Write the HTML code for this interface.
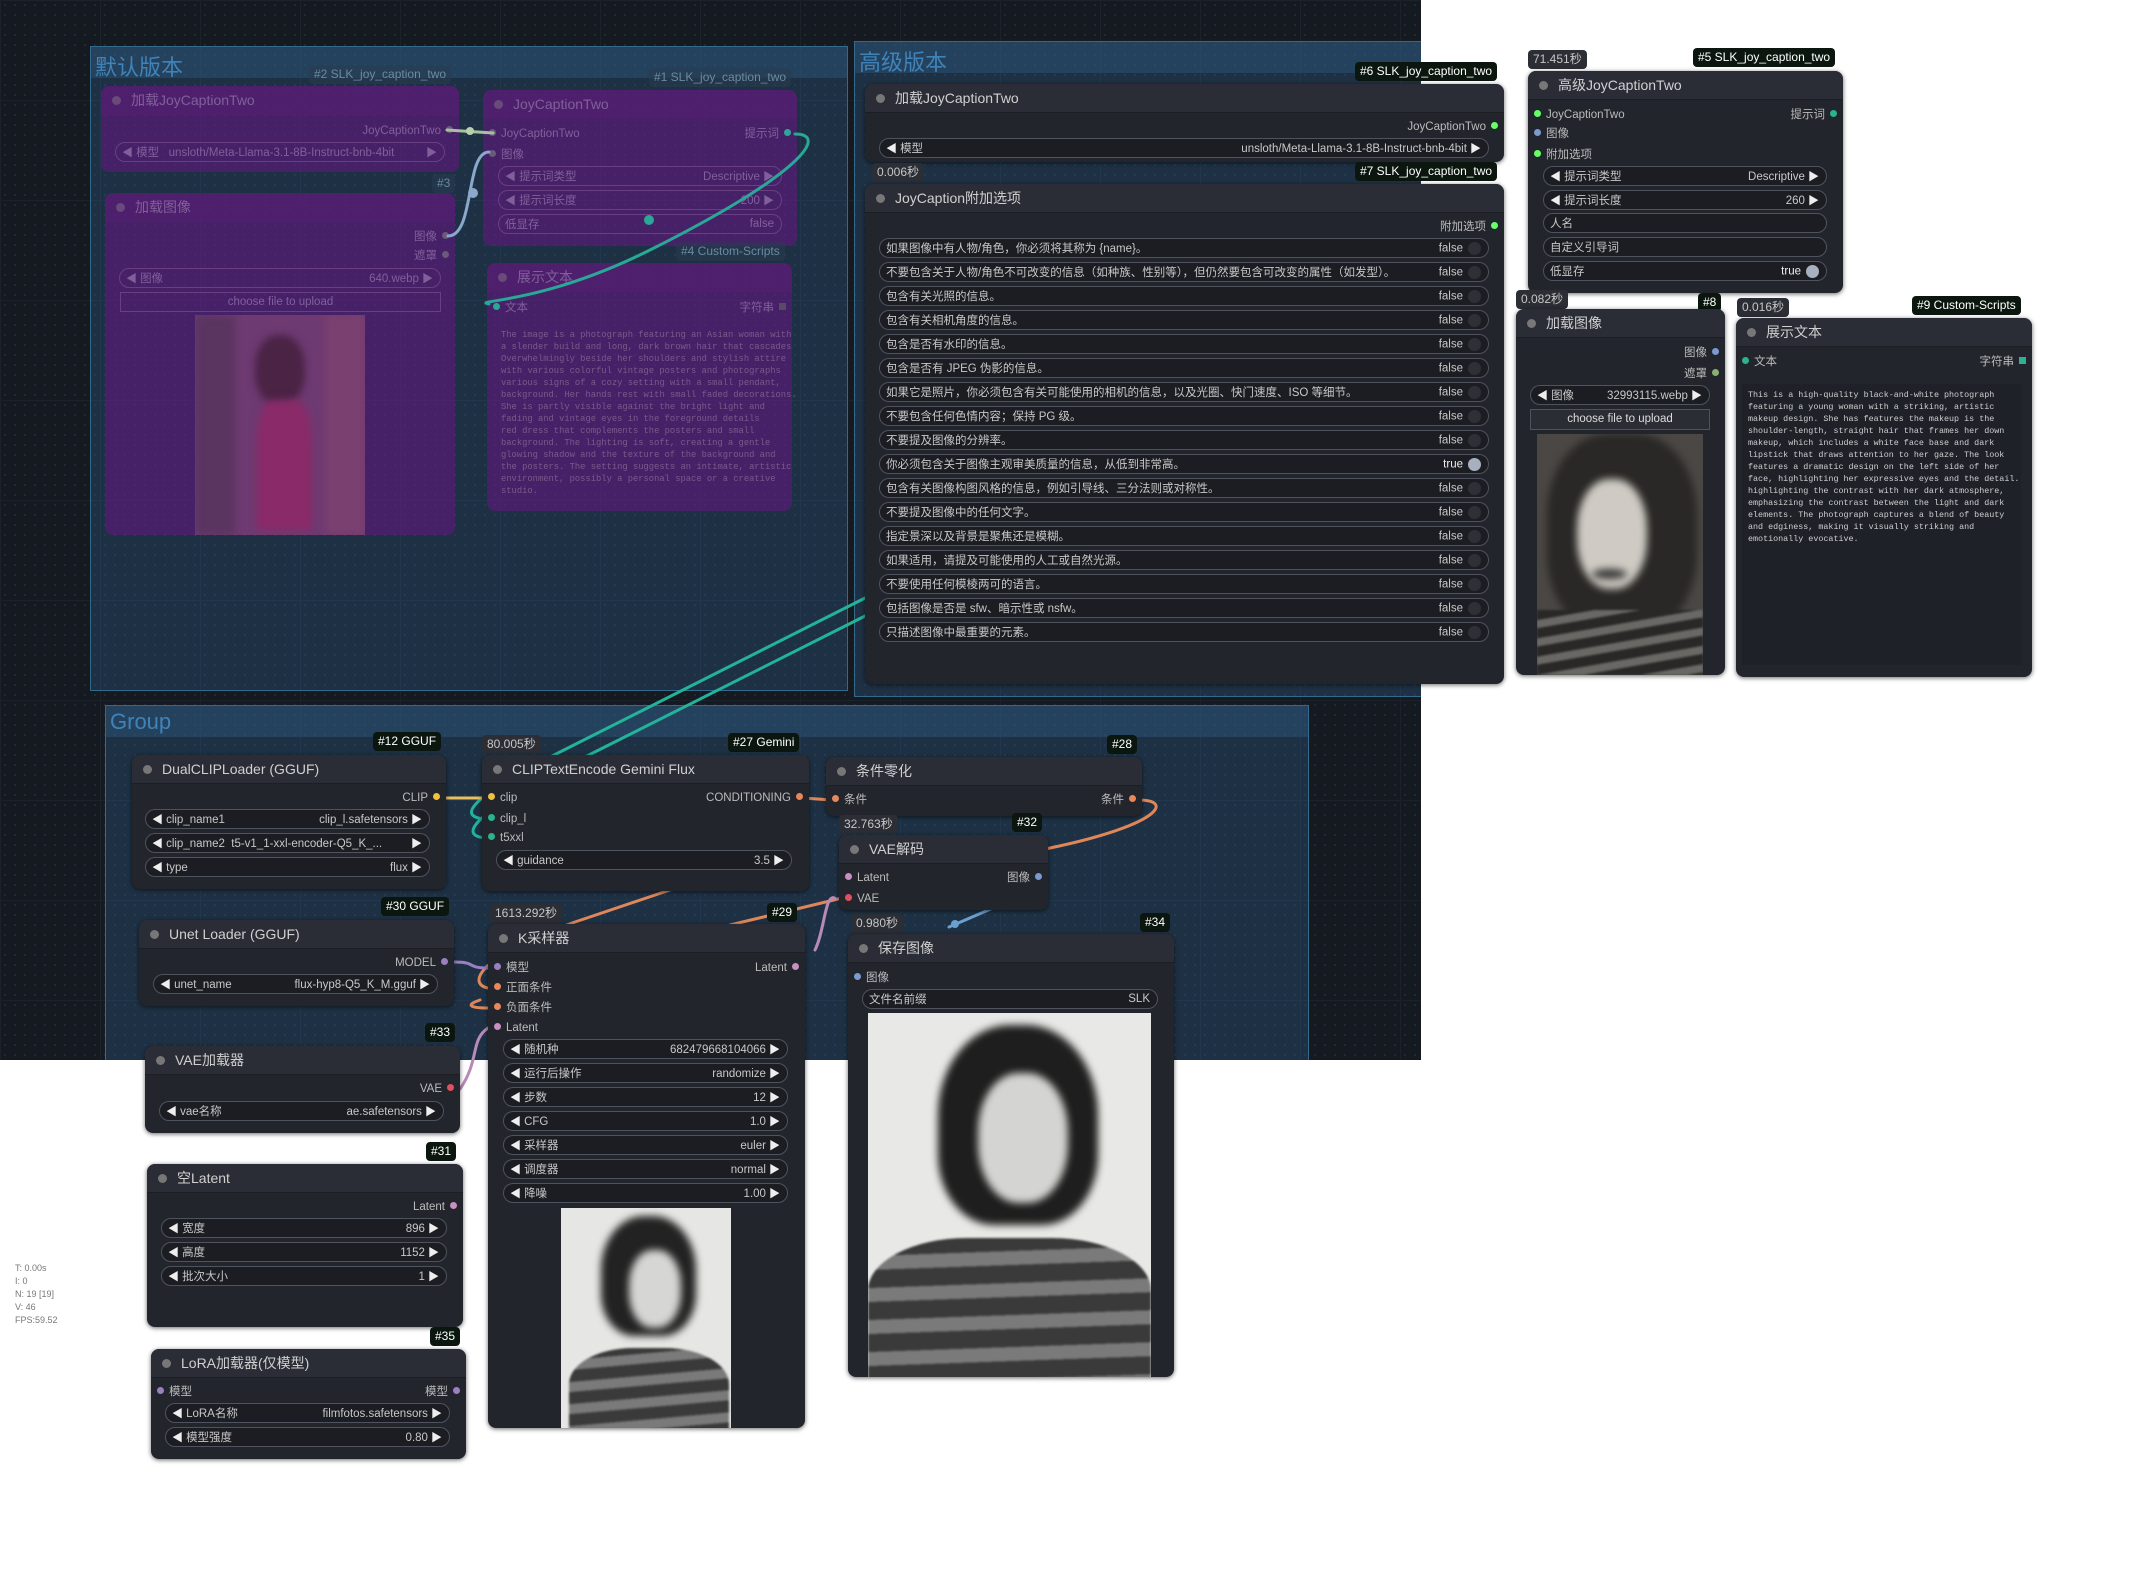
<!DOCTYPE html>
<html><head><meta charset="utf-8">
<style>
*{box-sizing:border-box;margin:0;padding:0}
body{width:2132px;height:1590px;background:#fff;position:relative;overflow:hidden;font-family:"Liberation Sans","Noto Sans CJK SC",sans-serif;}
#cv{position:absolute;left:0;top:0;width:1421px;height:1060px;background-color:#151920;
background-image:linear-gradient(#1c222c 1px,transparent 1px),linear-gradient(90deg,#1c222c 1px,transparent 1px),radial-gradient(#222a35 1px,transparent 1.2px);
background-size:100px 100px,100px 100px,10px 10px;}
.g{position:absolute;background:rgba(45,90,130,.38);border:1.5px solid #35698c}
.g .h{position:absolute;left:0;right:0;top:0;height:31px;background:rgba(50,100,140,.35)}
.g .gt{position:absolute;left:4px;top:3px;font-size:22px;color:#3f83b8}
.n{position:absolute;background:#22252c;border-radius:8px;box-shadow:0 1px 5px rgba(0,0,0,.6);color:#bbb;font-size:11.5px}
.t{height:29px;line-height:29px;background:#2a2d36;border-radius:8px 8px 0 0;border-bottom:1px solid #1c1e24;padding-left:30px;font-size:14px;color:#d0d0d0;position:relative;white-space:nowrap}
.t:before{content:"";position:absolute;left:11px;top:10px;width:9px;height:9px;border-radius:50%;background:#777}
.p{background:rgba(105,20,135,.55);box-shadow:none;color:#80609a}
.p .t{background:rgba(95,25,120,.3);border:none;color:#80609a}
.p .t:before{background:#6a4a7a}
.o{position:absolute;right:6px;height:14px;line-height:14px;white-space:nowrap}
.o b,.i b{display:inline-block;width:7px;height:7px;border-radius:50%;vertical-align:middle;margin-top:-2px}
.o b{margin-left:5px}
.i{position:absolute;left:6px;height:14px;line-height:14px;white-space:nowrap}
.i b{margin-right:5px}
.w{position:absolute;height:20px;border:1px solid #4e535d;border-radius:10px;background:#1b1d23;display:flex;justify-content:space-between;align-items:center;padding:0 7px 0 6px;white-space:nowrap;overflow:hidden;color:#c8c8c8;font-size:11.5px}
.w span:first-child:before{content:"◀ ";font-size:11px;color:#eee}
.w.a span:last-child:after{content:" ▶";font-size:11px;color:#eee}
.p .w{background:transparent;border-color:#6a3f82;color:#80609a}
.p .w span:before,.p .w span:after{color:#80609a!important}
.r span:first-child:before{content:""}
.k{display:inline-block;width:13px;height:13px;border-radius:50%;background:#2d3037;vertical-align:middle;margin-left:5px}
.bd{position:absolute;height:19px;line-height:19px;padding:0 5px;font-size:12px;border-radius:4px;white-space:nowrap}
.nb{background:#0b170e;color:#fff}
.tb{background:#2b2e35;color:#c6c6c6}
.pb{background:rgba(40,60,80,.5);color:#6b8aa0}
.mono{font-family:"Liberation Mono","Noto Sans CJK SC",monospace;font-size:8.4px;line-height:12px;white-space:pre}
.bl{filter:blur(4px)}
</style></head><body>
<div id="cv"></div>

<div class="g" style="left:90px;top:46px;width:758px;height:645px"><div class="h"></div><div class="gt">默认版本</div></div>
<div class="g" style="left:854px;top:41px;width:567px;height:656px;border-right:none"><div class="h"></div><div class="gt">高级版本</div></div>
<div class="g" style="left:105px;top:705px;width:1204px;height:355px;border-bottom:none"><div class="h"></div><div class="gt">Group</div></div>

<!-- purple bypassed nodes (under wires) -->
<div class="bd pb" style="left:309px;top:65px">#2 SLK_joy_caption_two</div>
<div class="n p" style="left:101px;top:86px;width:358px;height:86px">
 <div class="t">加载JoyCaptionTwo</div>
 <div class="o" style="top:38px">JoyCaptionTwo<b style="background:#6a5a7a"></b></div>
 <div class="w a" style="top:56px;left:14px;right:14px"><span>模型 &nbsp; unsloth/Meta-Llama-3.1-8B-Instruct-bnb-4bit</span><span></span></div>
</div>
<div class="bd pb" style="left:432px;top:174px">#3</div>
<div class="n p" style="left:105px;top:193px;width:350px;height:342px">
 <div class="t">加载图像</div>
 <div class="o" style="top:37px">图像<b style="background:#6a5a7a"></b></div>
 <div class="o" style="top:56px">遮罩<b style="background:#6a5a7a"></b></div>
 <div class="w a" style="top:75px;left:14px;right:14px"><span>图像</span><span>640.webp</span></div>
 <div style="position:absolute;top:99px;left:15px;right:14px;height:20px;border:1px solid #6a3f82;text-align:center;line-height:18px">choose file to upload</div>
 <div style="position:absolute;left:90px;top:122px;width:170px;height:220px;background:#6e3a72;overflow:hidden">
  <div class="bl" style="position:absolute;left:0;top:0;width:40px;height:220px;background:#5a3560"></div>
  <div class="bl" style="position:absolute;left:130px;top:0;width:40px;height:220px;background:#7a4070"></div>
  <div class="bl" style="position:absolute;left:60px;top:20px;width:50px;height:70px;border-radius:45%;background:#4a2345"></div>
  <div class="bl" style="position:absolute;left:62px;top:85px;width:55px;height:130px;border-radius:30% 30% 0 0;background:#8a2a68"></div>
 </div>
</div>
<div class="bd pb" style="left:649px;top:68px">#1 SLK_joy_caption_two</div>
<div class="n p" style="left:483px;top:90px;width:314px;height:156px">
 <div class="t">JoyCaptionTwo</div>
 <div class="i" style="top:37px"><b style="background:#6a5a7a"></b>JoyCaptionTwo</div>
 <div class="o" style="top:37px">提示词<b style="background:#2aa796"></b></div>
 <div class="i" style="top:58px"><b style="background:#6a5a7a"></b>图像</div>
 <div class="w a" style="top:76px;left:15px;right:15px"><span>提示词类型</span><span>Descriptive</span></div>
 <div class="w a" style="top:100px;left:15px;right:15px"><span>提示词长度</span><span>200</span></div>
 <div class="w r" style="top:124px;left:15px;right:15px"><span>低显存</span><span>false</span></div>
</div>
<div class="bd pb" style="left:676px;top:242px">#4 Custom-Scripts</div>
<div class="n p" style="left:487px;top:263px;width:305px;height:248px">
 <div class="t">展示文本</div>
 <div class="i" style="top:38px"><b style="background:#2aa796"></b>文本</div>
 <div class="o" style="top:38px">字符串<b style="background:#5a4a6a;border-radius:0"></b></div>
 <div class="mono" style="position:absolute;left:14px;top:66px;color:#7a5a8a;font-size:8.8px">The image is a photograph featuring an Asian woman with
a slender build and long, dark brown hair that cascades
Overwhelmingly beside her shoulders and stylish attire
with various colorful vintage posters and photographs
various signs of a cozy setting with a small pendant,
background. Her hands rest with small faded decorations.
She is partly visible against the bright light and
fading and vintage eyes in the foreground details
red dress that complements the posters and small
background. The lighting is soft, creating a gentle
glowing shadow and the texture of the background and
the posters. The setting suggests an intimate, artistic
environment, possibly a personal space or a creative
studio.</div>
</div>

<!-- wires -->
<svg style="position:absolute;left:0;top:0" width="2132" height="1590" fill="none" stroke-linecap="round">
<path d="M795,134 C830,134 800,175 650,250 C540,305 470,300 489,304" stroke="#2aa796" stroke-width="3"/>
<path d="M448,236 C475,236 465,152 489,152" stroke="#8aa8cc" stroke-width="3"/>
<path d="M447,130 L493,133" stroke="#a8c0a0" stroke-width="3"/>
<circle cx="470" cy="131" r="4" fill="#b8d0b0"/><circle cx="473" cy="193" r="5" fill="#8aa8cc"/><circle cx="649" cy="220" r="5" fill="#2aa796"/>
<path d="M873,594 L560,752 C465,800 455,819 490,819" stroke="#23b39a" stroke-width="3"/>
<path d="M873,612 L575,762 C470,815 455,838 490,838" stroke="#23b39a" stroke-width="3"/>
<path d="M446,798 L490,798" stroke="#e8c060" stroke-width="3"/>
<path d="M798,798 C815,798 820,800 836,800" stroke="#e0875a" stroke-width="3"/>
<path d="M1138,800 C1175,800 1160,825 1050,848 L730,925" stroke="#e0875a" stroke-width="3"/>
<path d="M670,890 L575,922 C470,960 470,985 488,988 M480,1000 C465,1005 470,1008 488,1008" stroke="#e0875a" stroke-width="3"/>
<path d="M949,927 L1000,905" stroke="#6a9fd0" stroke-width="3"/><circle cx="955" cy="924" r="4" fill="#6a9fd0"/>
<path d="M454,962 C478,962 465,968 488,968" stroke="#9a80c0" stroke-width="3"/>
<path d="M460,1089 C480,1060 470,1040 488,1028 M836,899 C825,890 825,930 815,950" stroke="#b88ab8" stroke-width="3"/>
</svg>

<!-- advanced nodes -->
<div class="bd nb" style="left:1355px;top:62px">#6 SLK_joy_caption_two</div>
<div class="n" style="left:865px;top:84px;width:639px;height:78px">
 <div class="t">加载JoyCaptionTwo</div>
 <div class="o" style="top:36px">JoyCaptionTwo<b style="background:#6f6"></b></div>
 <div class="w a" style="top:54px;left:14px;right:15px"><span>模型</span><span>unsloth/Meta-Llama-3.1-8B-Instruct-bnb-4bit</span></div>
</div>
<div class="bd tb" style="left:872px;top:163px">0.006秒</div>
<div class="bd nb" style="left:1355px;top:162px">#7 SLK_joy_caption_two</div>
<div class="n" style="left:865px;top:184px;width:639px;height:500px">
 <div class="t">JoyCaption附加选项</div>
 <div class="o" style="top:36px">附加选项<b style="background:#6f6"></b></div>
 <div class="w r" style="top:54px;left:14px;right:15px"><span>如果图像中有人物/角色，你必须将其称为 {name}。</span><span>false<i class="k"></i></span></div>
 <div class="w r" style="top:78px;left:14px;right:15px"><span>不要包含关于人物/角色不可改变的信息（如种族、性别等），但仍然要包含可改变的属性（如发型）。</span><span>false<i class="k"></i></span></div>
 <div class="w r" style="top:102px;left:14px;right:15px"><span>包含有关光照的信息。</span><span>false<i class="k"></i></span></div>
 <div class="w r" style="top:126px;left:14px;right:15px"><span>包含有关相机角度的信息。</span><span>false<i class="k"></i></span></div>
 <div class="w r" style="top:150px;left:14px;right:15px"><span>包含是否有水印的信息。</span><span>false<i class="k"></i></span></div>
 <div class="w r" style="top:174px;left:14px;right:15px"><span>包含是否有 JPEG 伪影的信息。</span><span>false<i class="k"></i></span></div>
 <div class="w r" style="top:198px;left:14px;right:15px"><span>如果它是照片，你必须包含有关可能使用的相机的信息，以及光圈、快门速度、ISO 等细节。</span><span>false<i class="k"></i></span></div>
 <div class="w r" style="top:222px;left:14px;right:15px"><span>不要包含任何色情内容；保持 PG 级。</span><span>false<i class="k"></i></span></div>
 <div class="w r" style="top:246px;left:14px;right:15px"><span>不要提及图像的分辨率。</span><span>false<i class="k"></i></span></div>
 <div class="w r" style="top:270px;left:14px;right:15px"><span>你必须包含关于图像主观审美质量的信息，从低到非常高。</span><span style="color:#eee">true<i class="k" style="background:#a8b0c0"></i></span></div>
 <div class="w r" style="top:294px;left:14px;right:15px"><span>包含有关图像构图风格的信息，例如引导线、三分法则或对称性。</span><span>false<i class="k"></i></span></div>
 <div class="w r" style="top:318px;left:14px;right:15px"><span>不要提及图像中的任何文字。</span><span>false<i class="k"></i></span></div>
 <div class="w r" style="top:342px;left:14px;right:15px"><span>指定景深以及背景是聚焦还是模糊。</span><span>false<i class="k"></i></span></div>
 <div class="w r" style="top:366px;left:14px;right:15px"><span>如果适用，请提及可能使用的人工或自然光源。</span><span>false<i class="k"></i></span></div>
 <div class="w r" style="top:390px;left:14px;right:15px"><span>不要使用任何模棱两可的语言。</span><span>false<i class="k"></i></span></div>
 <div class="w r" style="top:414px;left:14px;right:15px"><span>包括图像是否是 sfw、暗示性或 nsfw。</span><span>false<i class="k"></i></span></div>
 <div class="w r" style="top:438px;left:14px;right:15px"><span>只描述图像中最重要的元素。</span><span>false<i class="k"></i></span></div>
</div>

<div class="bd tb" style="left:1528px;top:50px">71.451秒</div>
<div class="bd nb" style="left:1693px;top:48px">#5 SLK_joy_caption_two</div>
<div class="n" style="left:1528px;top:71px;width:315px;height:222px">
 <div class="t">高级JoyCaptionTwo</div>
 <div class="i" style="top:37px"><b style="background:#6f6"></b>JoyCaptionTwo</div>
 <div class="o" style="top:37px">提示词<b style="background:#2ab38e"></b></div>
 <div class="i" style="top:56px"><b style="background:#7a9ad0"></b>图像</div>
 <div class="i" style="top:77px"><b style="background:#6f6"></b>附加选项</div>
 <div class="w a" style="top:95px;left:15px;right:16px"><span>提示词类型</span><span>Descriptive</span></div>
 <div class="w a" style="top:119px;left:15px;right:16px"><span>提示词长度</span><span>260</span></div>
 <div class="w r" style="top:142px;left:15px;right:16px"><span>人名</span><span></span></div>
 <div class="w r" style="top:166px;left:15px;right:16px"><span>自定义引导词</span><span></span></div>
 <div class="w r" style="top:190px;left:15px;right:16px"><span>低显存</span><span style="color:#eee">true<i class="k" style="background:#a8b0c0"></i></span></div>
</div>

<div class="bd nb" style="left:1698px;top:293px">#8</div>
<div class="bd tb" style="left:1516px;top:290px">0.082秒</div>
<div class="n" style="left:1516px;top:309px;width:209px;height:366px">
 <div class="t">加载图像</div>
 <div class="o" style="top:37px">图像<b style="background:#7a9ad0"></b></div>
 <div class="o" style="top:58px">遮罩<b style="background:#8ab070"></b></div>
 <div class="w a" style="top:76px;left:14px;right:15px"><span>图像</span><span>32993115.webp</span></div>
 <div style="position:absolute;top:100px;left:14px;right:15px;height:21px;border:1px solid #4e535d;background:#2a2d34;text-align:center;line-height:19px;color:#ddd">choose file to upload</div>
 <div style="position:absolute;left:21px;top:125px;width:166px;height:241px;background:#4a4744;overflow:hidden">
  <div class="bl" style="position:absolute;left:10px;top:0;width:150px;height:200px;border-radius:40%;background:#2a2826"></div>
  <div class="bl" style="position:absolute;left:40px;top:45px;width:70px;height:110px;border-radius:45%;background:#cfcbc4"></div>
  <div class="bl" style="position:absolute;left:55px;top:135px;width:35px;height:10px;border-radius:50%;background:#333"></div>
  <div style="position:absolute;left:0;right:0;bottom:0;height:65px;background:repeating-linear-gradient(170deg,#2a2826 0 10px,#6a6864 10px 18px);filter:blur(1px)"></div>
 </div>
</div>

<div class="bd tb" style="left:1737px;top:298px">0.016秒</div>
<div class="bd nb" style="left:1912px;top:296px">#9 Custom-Scripts</div>
<div class="n" style="left:1736px;top:318px;width:296px;height:359px">
 <div class="t">展示文本</div>
 <div class="i" style="top:37px"><b style="background:#2ab38e"></b>文本</div>
 <div class="o" style="top:37px">字符串<b style="background:#2ab38e;border-radius:0"></b></div>
 <div class="mono" style="position:absolute;left:6px;top:66px;width:279px;height:281px;background:#1e2128;padding:5px 0 0 6px;color:#cfcfcf;overflow:hidden">This is a high-quality black-and-white photograph
featuring a young woman with a striking, artistic
makeup design. She has features the makeup is the
shoulder-length, straight hair that frames her down
makeup, which includes a white face base and dark
lipstick that draws attention to her gaze. The look
features a dramatic design on the left side of her
face, highlighting her expressive eyes and the detail.
highlighting the contrast with her dark atmosphere,
emphasizing the contrast between the light and dark
elements. The photograph captures a blend of beauty
and edginess, making it visually striking and
emotionally evocative.</div>
</div>

<!-- bottom group nodes -->
<div class="bd nb" style="left:373px;top:732px">#12 GGUF</div>
<div class="n" style="left:132px;top:755px;width:314px;height:134px">
 <div class="t">DualCLIPLoader (GGUF)</div>
 <div class="o" style="top:36px">CLIP<b style="background:#f0c040"></b></div>
 <div class="w a" style="top:54px;left:13px;right:16px"><span>clip_name1</span><span>clip_l.safetensors</span></div>
 <div class="w a" style="top:78px;left:13px;right:16px"><span>clip_name2 &nbsp;t5-v1_1-xxl-encoder-Q5_K_...</span><span></span></div>
 <div class="w a" style="top:102px;left:13px;right:16px"><span>type</span><span>flux</span></div>
</div>

<div class="bd tb" style="left:482px;top:735px">80.005秒</div>
<div class="bd nb" style="left:728px;top:733px">#27 Gemini</div>
<div class="n" style="left:482px;top:755px;width:327px;height:136px">
 <div class="t">CLIPTextEncode Gemini Flux</div>
 <div class="i" style="top:36px"><b style="background:#f0c040"></b>clip</div>
 <div class="o" style="top:36px">CONDITIONING<b style="background:#e8885a"></b></div>
 <div class="i" style="top:57px"><b style="background:#2ab38e"></b>clip_l</div>
 <div class="i" style="top:76px"><b style="background:#2ab38e"></b>t5xxl</div>
 <div class="w a" style="top:95px;left:14px;right:17px"><span>guidance</span><span>3.5</span></div>
</div>

<div class="bd nb" style="left:1107px;top:735px">#28</div>
<div class="n" style="left:826px;top:757px;width:316px;height:59px">
 <div class="t">条件零化</div>
 <div class="i" style="top:36px"><b style="background:#e8885a"></b>条件</div>
 <div class="o" style="top:36px">条件<b style="background:#e8885a"></b></div>
</div>

<div class="bd tb" style="left:839px;top:815px">32.763秒</div>
<div class="bd nb" style="left:1012px;top:813px">#32</div>
<div class="n" style="left:839px;top:835px;width:209px;height:75px">
 <div class="t">VAE解码</div>
 <div class="i" style="top:36px"><b style="background:#c890c0"></b>Latent</div>
 <div class="o" style="top:36px">图像<b style="background:#7a9ad0"></b></div>
 <div class="i" style="top:57px"><b style="background:#e05060"></b>VAE</div>
</div>

<div class="bd nb" style="left:381px;top:897px">#30 GGUF</div>
<div class="n" style="left:139px;top:920px;width:315px;height:86px">
 <div class="t">Unet Loader (GGUF)</div>
 <div class="o" style="top:36px">MODEL<b style="background:#9a80c0"></b></div>
 <div class="w a" style="top:54px;left:14px;right:16px"><span>unet_name</span><span>flux-hyp8-Q5_K_M.gguf</span></div>
</div>

<div class="bd tb" style="left:490px;top:904px">1613.292秒</div>
<div class="bd nb" style="left:767px;top:903px">#29</div>
<div class="n" style="left:488px;top:924px;width:317px;height:504px">
 <div class="t">K采样器</div>
 <div class="i" style="top:37px"><b style="background:#9a80c0"></b>模型</div>
 <div class="o" style="top:37px">Latent<b style="background:#c890c0"></b></div>
 <div class="i" style="top:57px"><b style="background:#e8885a"></b>正面条件</div>
 <div class="i" style="top:77px"><b style="background:#e8885a"></b>负面条件</div>
 <div class="i" style="top:97px"><b style="background:#c890c0"></b>Latent</div>
 <div class="w a" style="top:115px;left:15px;right:17px"><span>随机种</span><span>682479668104066</span></div>
 <div class="w a" style="top:139px;left:15px;right:17px"><span>运行后操作</span><span>randomize</span></div>
 <div class="w a" style="top:163px;left:15px;right:17px"><span>步数</span><span>12</span></div>
 <div class="w a" style="top:187px;left:15px;right:17px"><span>CFG</span><span>1.0</span></div>
 <div class="w a" style="top:211px;left:15px;right:17px"><span>采样器</span><span>euler</span></div>
 <div class="w a" style="top:235px;left:15px;right:17px"><span>调度器</span><span>normal</span></div>
 <div class="w a" style="top:259px;left:15px;right:17px"><span>降噪</span><span>1.00</span></div>
 <div style="position:absolute;left:73px;top:284px;width:170px;height:220px;background:#e6e6e4;overflow:hidden">
  <div class="bl" style="position:absolute;left:40px;top:8px;width:95px;height:120px;border-radius:45% 45% 35% 35%;background:#222"></div>
  <div class="bl" style="position:absolute;left:68px;top:42px;width:52px;height:78px;border-radius:45%;background:#d6d6d4"></div>
  <div style="position:absolute;left:8px;top:140px;width:160px;height:90px;border-radius:40% 40% 0 0;background:repeating-linear-gradient(175deg,#3a3a3a 0 12px,#7a7a7a 12px 22px);filter:blur(1px)"></div>
 </div>
</div>

<div class="bd tb" style="left:851px;top:914px">0.980秒</div>
<div class="bd nb" style="left:1140px;top:913px">#34</div>
<div class="n" style="left:848px;top:934px;width:326px;height:443px">
 <div class="t">保存图像</div>
 <div class="i" style="top:37px"><b style="background:#7a9ad0"></b>图像</div>
 <div class="w r" style="top:55px;left:14px;right:16px"><span>文件名前缀</span><span>SLK</span></div>
 <div style="position:absolute;left:20px;top:79px;width:283px;height:364px;background:#e8e8e6;overflow:hidden">
  <div class="bl" style="position:absolute;left:70px;top:12px;width:160px;height:200px;border-radius:45% 45% 35% 35%;background:#1e1e1e"></div>
  <div class="bl" style="position:absolute;left:110px;top:60px;width:90px;height:130px;border-radius:45%;background:#d4d4d2"></div>
  <div style="position:absolute;left:0;top:225px;width:283px;height:150px;border-radius:35% 35% 0 0;background:repeating-linear-gradient(178deg,#3a3a3a 0 18px,#7a7a7a 18px 32px);filter:blur(1px)"></div>
 </div>
</div>

<div class="bd nb" style="left:425px;top:1023px">#33</div>
<div class="n" style="left:145px;top:1046px;width:315px;height:87px">
 <div class="t">VAE加载器</div>
 <div class="o" style="top:36px">VAE<b style="background:#e05060"></b></div>
 <div class="w a" style="top:55px;left:14px;right:16px"><span>vae名称</span><span>ae.safetensors</span></div>
</div>

<div class="bd nb" style="left:426px;top:1142px">#31</div>
<div class="n" style="left:147px;top:1164px;width:316px;height:163px">
 <div class="t">空Latent</div>
 <div class="o" style="top:36px">Latent<b style="background:#c890c0"></b></div>
 <div class="w a" style="top:54px;left:14px;right:16px"><span>宽度</span><span>896</span></div>
 <div class="w a" style="top:78px;left:14px;right:16px"><span>高度</span><span>1152</span></div>
 <div class="w a" style="top:102px;left:14px;right:16px"><span>批次大小</span><span>1</span></div>
</div>

<div class="bd nb" style="left:430px;top:1327px">#35</div>
<div class="n" style="left:151px;top:1349px;width:315px;height:110px">
 <div class="t">LoRA加载器(仅模型)</div>
 <div class="i" style="top:36px"><b style="background:#9a80c0"></b>模型</div>
 <div class="o" style="top:36px">模型<b style="background:#9a80c0"></b></div>
 <div class="w a" style="top:54px;left:14px;right:16px"><span>LoRA名称</span><span>filmfotos.safetensors</span></div>
 <div class="w a" style="top:78px;left:14px;right:16px"><span>模型强度</span><span>0.80</span></div>
</div>

<div style="position:absolute;left:15px;top:1262px;font-size:9px;line-height:13px;color:#777">T: 0.00s<br>I: 0<br>N: 19 [19]<br>V: 46<br>FPS:59.52</div>
</body></html>
